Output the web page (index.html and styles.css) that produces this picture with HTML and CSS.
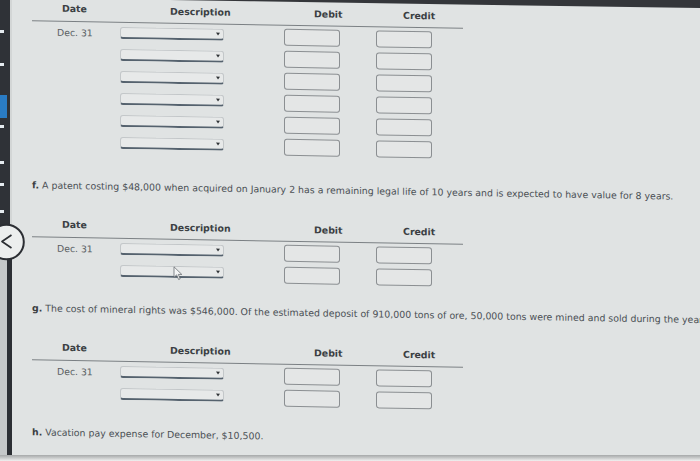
FILE: index.html
```html
<!DOCTYPE html>
<html>
<head>
<meta charset="utf-8">
<link rel="stylesheet" href="styles.css">
</head>
<body>
<div class="screen">
  <div class="rail">
    <div class="rail-top">
      <div class="mk m1"></div>
      <div class="mk m2"></div>
      <div class="blue"></div>
      <div class="mk m3"></div>
      <div class="mk m4"></div>
      <div class="mk m5"></div>
      <div class="mk m6"></div>
    </div>
    <div class="rail-bottom"></div>
  </div>
  <main class="content">
    <section class="journal first">
      <div class="jhead"><span class="h-date">Date</span><span class="h-desc">Description</span><span class="h-debit">Debit</span><span class="h-credit">Credit</span></div>
      <div class="jrows">
        <div class="jrow"><span class="date">Dec. 31</span><span class="select"></span><span class="amt"></span><span class="amt"></span></div>
        <div class="jrow"><span class="date"></span><span class="select"></span><span class="amt"></span><span class="amt"></span></div>
        <div class="jrow"><span class="date"></span><span class="select"></span><span class="amt"></span><span class="amt"></span></div>
        <div class="jrow"><span class="date"></span><span class="select"></span><span class="amt"></span><span class="amt"></span></div>
        <div class="jrow"><span class="date"></span><span class="select"></span><span class="amt"></span><span class="amt"></span></div>
        <div class="jrow"><span class="date"></span><span class="select"></span><span class="amt"></span><span class="amt"></span></div>
      </div>
    </section>

    <p class="q q-f"><b>f.</b> A patent costing $48,000 when acquired on January 2 has a remaining legal life of 10 years and is expected to have value for 8 years.</p>

    <section class="journal">
      <div class="jhead"><span class="h-date">Date</span><span class="h-desc">Description</span><span class="h-debit">Debit</span><span class="h-credit">Credit</span></div>
      <div class="jrows">
        <div class="jrow"><span class="date">Dec. 31</span><span class="select"></span><span class="amt"></span><span class="amt"></span></div>
        <div class="jrow"><span class="date"></span><span class="select"><svg class="cursor" viewBox="0 0 10 15"><path d="M1 1 L1 11.5 L3.6 9 L5.6 13.6 L7.2 12.9 L5.3 8.5 L8.8 8.5 Z" fill="#f4f5f5" stroke="#6a6f73" stroke-width="0.8" stroke-linejoin="round"/></svg></span><span class="amt"></span><span class="amt"></span></div>
      </div>
    </section>

    <p class="q q-g"><b>g.</b> The cost of mineral rights was $546,000. Of the estimated deposit of 910,000 tons of ore, 50,000 tons were mined and sold during the year.</p>

    <section class="journal">
      <div class="jhead"><span class="h-date">Date</span><span class="h-desc">Description</span><span class="h-debit">Debit</span><span class="h-credit">Credit</span></div>
      <div class="jrows">
        <div class="jrow"><span class="date">Dec. 31</span><span class="select"></span><span class="amt"></span><span class="amt"></span></div>
        <div class="jrow"><span class="date"></span><span class="select"></span><span class="amt"></span><span class="amt"></span></div>
      </div>
    </section>

    <p class="q q-h"><b>h.</b> Vacation pay expense for December, $10,500.</p>
  </main>
</div>
<div class="bezel-bottom"></div>
<svg class="bezel-top" viewBox="0 0 700 10"><polygon points="170,0 700,0 700,8 460,4.6 250,1.2" fill="#34363a"/></svg>
<svg class="back" viewBox="0 0 38 38"><circle cx="18.5" cy="19" r="17.3" fill="#eceeee" stroke="#2b2e33" stroke-width="2"/><polyline points="23.5,12 14,18.5 23.5,25" fill="none" stroke="#2b2e33" stroke-width="1.7" stroke-linejoin="round"/></svg>
</body>
</html>
```

FILE: styles.css
```css
* { box-sizing: border-box; }
html, body { margin: 0; padding: 0; }
body {
  width: 700px;
  height: 461px;
  overflow: hidden;
  position: relative;
  background: #e0e3e3;
  font-family: "DejaVu Sans", Verdana, sans-serif;
}
.screen { display: flex; height: 455px; }

.rail { width: 12px; flex: none; display: flex; flex-direction: column; }
.rail-top {
  height: 226px;
  background: #2f3237;
  border-right: 2px solid #d3d6d6;
  display: flex;
  flex-direction: column;
  align-items: flex-start;
}
.rail-bottom { flex: 1; background: #c5c8c9; border-right: 5px solid #2c2f34; }
.mk { width: 4px; height: 3px; background: #e6ecf0; }
.m1 { margin-top: 30px; }
.m2 { margin-top: 30px; }
.blue { width: 7px; height: 23px; margin-top: 29px; background: #2a7cc4; }
.m3 { margin-top: 7px; }
.m4 { margin-top: 33px; }
.m5 { margin-top: 19px; }
.m6 { margin-top: 24px; }

.content {
  flex: 1;
  min-width: 0;
  padding-left: 20px;
  transform: skewY(1deg);
  transform-origin: 0 0;
}

.journal { width: 431px; margin-top: 24px; }
.journal.first { margin-top: -1px; }
.jhead {
  display: grid;
  grid-template-columns: 88px 164px 92px 87px;
  height: 22px;
  border-bottom: 1px solid #7b8084;
  align-items: end;
  font-weight: bold;
  font-size: 9.4px;
  line-height: 12px;
  color: #3b3f43;
}
.jhead span { padding-bottom: 5px; white-space: nowrap; }
.jhead .h-date { padding-left: 30px; padding-bottom: 6px; }
.h-desc { padding-left: 50px; }
.h-debit { padding-left: 30px; }
.h-credit { padding-left: 27px; }

.jrows { padding-top: 3px; display: flex; flex-direction: column; gap: 5px; }
.jrow {
  display: grid;
  grid-template-columns: 88px 164px 92px 87px;
  height: 17px;
  align-items: start;
}
.date {
  padding-left: 25px;
  font-size: 9.3px;
  line-height: 16px;
  color: #585d61;
  white-space: nowrap;
}
.select {
  position: relative;
  margin-top: 1px;
  width: 104px;
  height: 12px;
  background: #e7e9e9;
  border: 1px solid #c3c7c9;
  border-bottom: 2px solid #55626e;
  border-radius: 3px;
}
.select::after {
  content: "";
  position: absolute;
  right: 3px;
  top: 3px;
  border-left: 2px solid transparent;
  border-right: 2px solid transparent;
  border-top: 3px solid #2f3336;
}
.amt {
  width: 56px;
  height: 17px;
  background: #e4e6e6;
  border: 1.5px solid #8b8f92;
  border-radius: 3px;
}
.cursor { position: absolute; left: 52px; top: -1px; width: 10px; height: 15px; }

.q {
  margin: 28px 0 0;
  font-size: 9.4px;
  line-height: 12px;
  color: #4a4f54;
  white-space: nowrap;
}
.q b { color: #3a3e42; }
.q-g { margin-top: 23px; }
.q-h { margin-top: 24px; }

.bezel-bottom { height: 6px; background: linear-gradient(#a6a8a9, #c9cbcb 50%, #f1f1f1); }
.bezel-top { position: absolute; top: 0; left: 0; width: 700px; height: 10px; }
.back { position: absolute; left: -12px; top: 223px; width: 38px; height: 38px; }
```
